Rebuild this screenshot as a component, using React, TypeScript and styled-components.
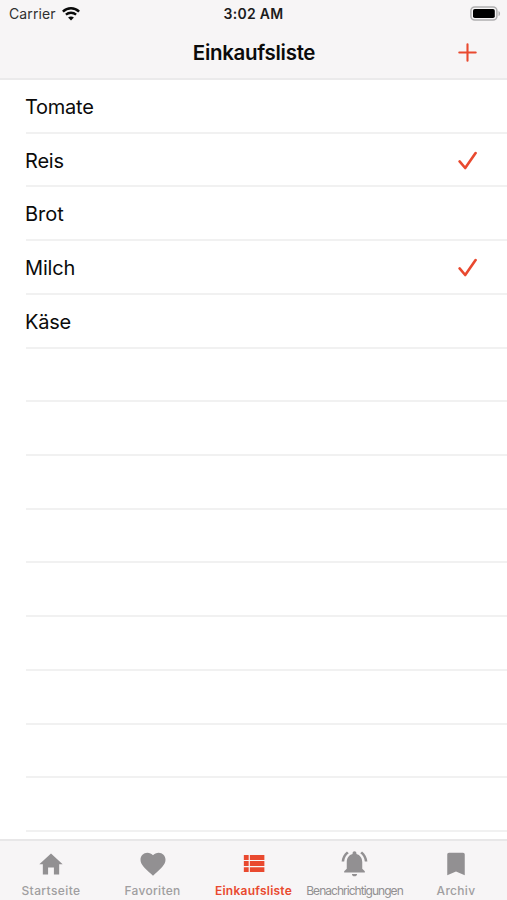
import React from "react";
import styled, { createGlobalStyle } from "styled-components";

const ACCENT = "#e9492f";
const MUTED = "#929092";

const GlobalStyle = createGlobalStyle`
  * { box-sizing: border-box; }
  body { margin: 0; background: #fff; }
`;

const Screen = styled.div`
  display: flex;
  flex-direction: column;
  width: 507px;
  height: 900px;
  overflow: hidden;
  background: #fff;
  color: #0b0b0b;
  font-family: Inter, "Liberation Sans", sans-serif;
`;

const Header = styled.header`
  flex: none;
  height: 80px;
  background: #f7f5f6;
  border-bottom: 2px solid #ebeaeb;
`;

const StatusBar = styled.div`
  display: grid;
  grid-template-columns: 1fr auto 1fr;
  align-items: center;
  height: 27px;
  padding: 0 6px 0 9px;
`;

const Carrier = styled.div`
  display: flex;
  align-items: center;
  gap: 6px;
  font-size: 14px;
  letter-spacing: 0.1px;
  color: #303030;
`;

const Clock = styled.div`
  font-size: 14px;
  font-weight: 600;
  letter-spacing: 0.3px;
  padding-right: 3px;
  color: #1c1c1c;
`;

const BatterySlot = styled.div`
  display: flex;
  justify-content: flex-end;
`;

const NavBar = styled.div`
  display: grid;
  grid-template-columns: 1fr auto 1fr;
  align-items: center;
  height: 50px;
  padding-right: 30px;
  padding-left: 31px;
`;

const Title = styled.h1`
  grid-column: 2;
  margin: 0;
  font-size: 20.5px;
  font-weight: 600;
  letter-spacing: -0.3px;
`;

const AddButton = styled.button`
  justify-self: end;
  display: flex;
  padding: 0;
  border: 0;
  background: none;
`;

const List = styled.ul`
  flex: 1;
  min-height: 0;
  overflow: hidden;
  margin: 0;
  padding: 0 0 0 26px;
  list-style: none;
`;

const Row = styled.li`
  display: flex;
  align-items: center;
  justify-content: space-between;
  height: 53.72px;
  padding-top: 2px;
  padding-right: 29px;
  border-bottom: 2px solid #f1f1f1;
`;

const ItemName = styled.span<{ $spacing: number }>`
  margin-left: -1px;
  font-size: 20px;
  line-height: 24px;
  letter-spacing: ${(p) => p.$spacing}px;
`;

const TabBar = styled.nav`
  flex: none;
  display: grid;
  grid-template-columns: 102px 101px 101px 101px 102px;
  height: 61px;
  border-top: 2px solid #e8e7e8;
  background: #f7f5f6;
`;

const Tab = styled.a<{ $active?: boolean }>`
  display: flex;
  flex-direction: column;
  align-items: center;
  padding-top: 7px;
  color: ${(p) => (p.$active ? ACCENT : MUTED)};
`;

const IconBox = styled.span`
  display: flex;
  align-items: center;
  justify-content: center;
  height: 31px;
`;

const TabLabel = styled.span<{ $active?: boolean; $dense?: boolean; $spacing: number }>`
  margin-top: 4px;
  font-size: 12px;
  line-height: 15px;
  font-weight: ${(p) => (p.$active ? 600 : p.$dense ? 400 : 500)};
  letter-spacing: ${(p) => p.$spacing}px;
  white-space: nowrap;
  color: ${(p) => (p.$active ? ACCENT : p.$dense ? "#918f91" : "#a09ea0")};
`;

const Wifi = () => (
  <svg width="18" height="14" viewBox="0 0 18 14" fill="none" stroke="#0a0a0a">
    <path d="M.9 4.6C5.5.2 12.5.2 17.1 4.6" strokeWidth="2.5" />
    <path d="M3.9 7.7c2.9-2.6 7.3-2.6 10.2 0" strokeWidth="2.3" />
    <path d="M9 13.4 6.1 10.5c1.7-1.5 4.1-1.5 5.8 0z" fill="#0a0a0a" stroke="none" />
  </svg>
);

const Battery = () => (
  <svg width="31" height="16" viewBox="0 0 31 16">
    <rect x=".9" y="1" width="26" height="13" rx="3.8" fill="#f7f5f6" stroke="#b0afb0" strokeWidth="1.5" />
    <rect x="3" y="3" width="21.8" height="9" rx="1.8" fill="#000" />
    <path d="M28.5 4.9c2.1.7 2.1 4.5 0 5.2z" fill="#b0afb0" />
  </svg>
);

const Plus = () => (
  <svg width="19" height="19" viewBox="0 0 19 19" stroke={ACCENT} strokeWidth="2.1" strokeLinecap="round">
    <path d="M9.5 1.3v16.4M1.3 9.5h16.4" />
  </svg>
);

const Check = () => (
  <svg width="20" height="20" viewBox="0 0 20 20" fill="none" stroke={ACCENT} strokeWidth="2.6" strokeLinecap="round" strokeLinejoin="round">
    <path d="M1.6 10.4 7.2 17 17.6 2" />
  </svg>
);

const icons = {
  home: "M9.5 21v-6h5v6H19v-8.7h3L12 3 2 12.3h3V21z",
  heart:
    "M12 21.35l-1.45-1.32C5.4 15.36 2 12.28 2 8.5 2 5.42 4.42 3 7.5 3c1.74 0 3.41.81 4.5 2.09C13.09 3.81 14.76 3 16.5 3 19.58 3 22 5.42 22 8.5c0 3.78-3.4 6.86-8.55 11.54z",
  list: "M4 14h4v-4H4zm0 5h4v-4H4zM4 9h4V5H4zm5 5h12v-4H9zm0 5h12v-4H9zM9 5v4h12V5z",
  bell:
    "M7.58 4.08 6.15 2.65C3.75 4.48 2.17 7.3 2.03 10.5h2c.15-2.65 1.51-4.97 3.55-6.42zm12.39 6.42h2c-.15-3.2-1.73-6.02-4.12-7.85l-1.42 1.43c2.02 1.45 3.39 3.77 3.54 6.42zM18 11c0-3.07-1.64-5.64-4.5-6.32V4c0-.83-.67-1.5-1.5-1.5s-1.5.67-1.5 1.5v.68C7.63 5.36 6 7.92 6 11v5l-2 2v1h16v-1l-2-2zm-6 10.9c1.1 0 2-.7 2-1.8h-4c0 1.1.9 1.8 2 1.8z",
  bookmark: "M17.6 3H6.4C5.6 3 5 3.6 5 4.4V21l7-3 7 3V4.4c0-.8-.6-1.4-1.4-1.4z",
};

const items = [
  { name: "Tomate", done: false, spacing: -0.25 },
  { name: "Reis", done: true, spacing: -0.2 },
  { name: "Brot", done: false, spacing: 0 },
  { name: "Milch", done: true, spacing: -0.15 },
  { name: "Käse", done: false, spacing: -0.2 },
];

const tabs: {
  label: string;
  icon: keyof typeof icons;
  size: number;
  spacing: number;
  active?: boolean;
  dense?: boolean;
}[] = [
  { label: "Startseite", icon: "home", size: 28, spacing: 0.4 },
  { label: "Favoriten", icon: "heart", size: 30, spacing: 0.3 },
  { label: "Einkaufsliste", icon: "list", size: 29, spacing: 0.25, active: true },
  { label: "Benachrichtigungen", icon: "bell", size: 31, spacing: -0.97, dense: true },
  { label: "Archiv", icon: "bookmark", size: 30, spacing: 0.3 },
];

const emptyRows = Array.from({ length: 9 }, (_, i) => i);

export default function App() {
  return (
    <Screen>
      <GlobalStyle />
      <Header>
        <StatusBar>
          <Carrier>
            Carrier
            <Wifi />
          </Carrier>
          <Clock>3:02 AM</Clock>
          <BatterySlot>
            <Battery />
          </BatterySlot>
        </StatusBar>
        <NavBar>
          <Title>Einkaufsliste</Title>
          <AddButton aria-label="Hinzufügen">
            <Plus />
          </AddButton>
        </NavBar>
      </Header>
      <List>
        {items.map((item) => (
          <Row key={item.name}>
            <ItemName $spacing={item.spacing}>{item.name}</ItemName>
            {item.done && <Check />}
          </Row>
        ))}
        {emptyRows.map((n) => (
          <Row key={n} />
        ))}
      </List>
      <TabBar>
        {tabs.map((tab) => (
          <Tab key={tab.label} $active={tab.active}>
            <IconBox>
              <svg width={tab.size} height={tab.size} viewBox="0 0 24 24" fill="currentColor">
                <path d={icons[tab.icon]} />
              </svg>
            </IconBox>
            <TabLabel $active={tab.active} $dense={tab.dense} $spacing={tab.spacing}>
              {tab.label}
            </TabLabel>
          </Tab>
        ))}
      </TabBar>
    </Screen>
  );
}
